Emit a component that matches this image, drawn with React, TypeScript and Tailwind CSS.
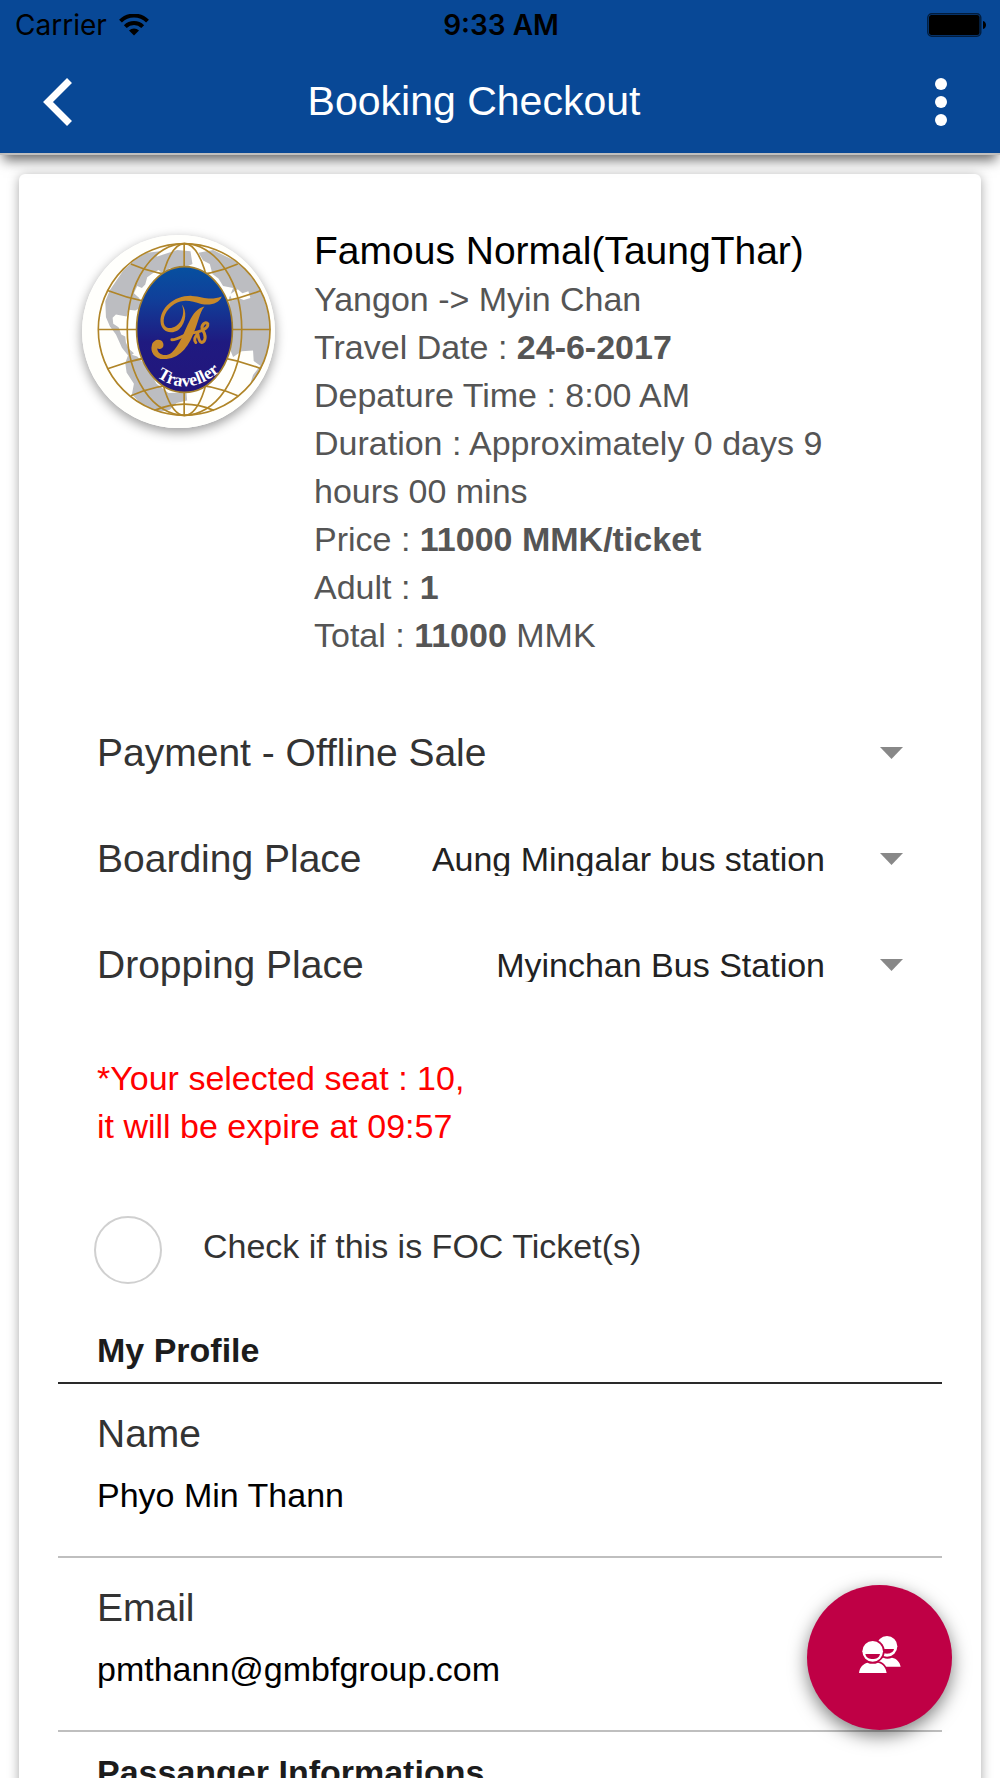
import React, { useState } from 'react';

interface PlaceSelectProps {
  id: string;
  label: string;
  options: string[];
}

interface ProfileFieldProps {
  id: string;
  label: string;
  type: string;
  defaultValue: string;
}

const Caret = () => (
  <svg className="w-[23px] h-3 shrink-0 pointer-events-none" viewBox="0 0 23 12" fill="#888888">
    <path d="M0 0H23L11.5 12Z" />
  </svg>
);

const WifiIcon = () => (
  <svg className="w-[30px] h-[22px]" viewBox="0 0 30 22">
    <path d="M1.5 7.2A19 19 0 0 1 28.5 7.2" fill="none" stroke="#000" strokeWidth="4" />
    <path d="M6.3 12.6A12.300 12.300 0 0 1 23.7 12.6" fill="none" stroke="#000" strokeWidth="4" />
    <path d="M10 16.4A7.2 7.2 0 0 1 20 16.4L15 21.5Z" />
  </svg>
);

const BatteryIcon = () => (
  <svg className="w-[60px] h-6" viewBox="0 0 60 24">
    <rect x="0.8" y="0.8" width="53" height="22.4" rx="4" fill="none" stroke="#021c3c" strokeWidth="1.4" />
    <rect x="2" y="2" width="50.6" height="20" rx="2.5" />
    <path d="M56 8C60 9 60 15 56 16Z" />
  </svg>
);

const TravellerLogo = () => (
  <svg className="w-full h-full rounded-full" viewBox="66 73 580 580" role="img" aria-label="Famous Traveller">
    <defs>
      <linearGradient id="badge" x1="0" y1="0" x2="0" y2="1">
        <stop offset="0" stopColor="#0650a0" />
        <stop offset="0.25" stopColor="#10409a" />
        <stop offset="0.6" stopColor="#1f1a80" />
        <stop offset="1" stopColor="#23167c" />
      </linearGradient>
      <clipPath id="globe">
        <circle cx="373" cy="357" r="259" />
      </clipPath>
      <path id="motto" d="M278 490Q385 574 492 472" />
    </defs>
    <rect x="66" y="73" width="580" height="580" fill="#fffffc" />
    <g clipPath="url(#globe)" fill="#bcbdc1">
      <path d="M262 126L300 122L290 138L322 128L352 118L392 122L398 160L372 172L330 172L310 190L296 178L282 186L262 200L256 222L246 232L232 226L222 248L238 262L246 290L226 300L206 298L200 318L168 312L158 322L160 340L176 350L184 372L196 378L198 396L206 414L222 428L208 440L186 412L168 372L150 348L138 320L136 272L150 238L190 180L226 146Z" />
      <path d="M206 430L232 438L262 470L290 520L326 548L380 546L382 570L350 578L330 598L290 606L240 576L216 552L222 520L200 486L196 458Z" />
      <path d="M416 126L460 118L540 158L600 230L634 330L634 400L612 460L588 520L566 538L580 494L602 466L582 452L580 420L546 422L520 440L504 400L510 300L508 262L520 232L490 226L476 204L458 190L450 160L430 150Z" />
    </g>
    <path d="M510 252L534 236L548 248L566 242L572 262L552 268L536 262L518 270Z" fill="#fffffc" />
    <g fill="none" stroke="#b08528" strokeWidth="5">
      <circle cx="373" cy="357" r="258" />
      <ellipse cx="374" cy="357" rx="172" ry="258" />
      <ellipse cx="374" cy="357" rx="84" ry="258" />
      <path d="M373 98V616M114 357H632" />
      <path d="M143 240Q374 330 604 240M213 160Q374 230 534 160" />
      <path d="M143 475Q374 385 604 475M213 556Q374 486 534 556M284 600Q374 562 462 600" />
    </g>
    <ellipse cx="374" cy="357" rx="144" ry="189" fill="url(#badge)" stroke="#a5802e" strokeWidth="5" />
    {/* gold monogram swashes */}
    <g fill="#c8892a">
      <path d="M366 282C382 300 380 336 358 356C336 374 304 366 302 334C300 292 344 254 396 256C430 258 448 272 486 258C478 280 450 286 424 280C396 272 372 264 344 280C318 296 306 324 314 344C324 360 350 352 362 332C372 314 372 298 366 282Z" />
      <path d="M434 288C418 308 416 336 402 366C386 410 358 446 312 446C284 446 270 424 276 404C280 386 304 382 310 398C314 412 302 418 292 414C294 434 318 440 336 426C360 404 372 366 388 334C400 308 414 292 434 288Z" />
    </g>
    <g fill="none" stroke="#c8892a" strokeLinecap="round">
      <path d="M336 388C358 388 370 372 392 368C424 364 446 354 444 340C438 330 422 344 428 358C440 374 438 394 426 396C416 394 416 378 414 370C404 378 402 390 408 396" strokeWidth="9" />
    </g>
    <text fontFamily="Liberation Serif, serif" fontWeight="700" fontSize="53" fill="#fff">
      <textPath href="#motto" startOffset="50%" textAnchor="middle">
        Traveller
      </textPath>
    </text>
  </svg>
);

const PeopleIcon = () => (
  <svg className="w-[42px] h-[37px]" viewBox="233 225 126 111">
    <circle cx="317" cy="256" r="31" fill="#fff" />
    <path d="M298 264H338C336 274 326 278 317 278C308 278 300 274 298 264Z" fill="#bf0045" />
    <path d="M284 317C286 300 298 292 306 290Q318 296 332 290C346 292 356 304 358 317Z" fill="#fff" />
    <circle cx="274" cy="271" r="36" fill="#bf0045" />
    <path d="M226 340C230 310 244 298 262 300H286C304 300 318 314 322 340Z" fill="#bf0045" />
    <circle cx="274" cy="271" r="31" fill="#fff" />
    <path d="M252 279H296C294 291 284 294 274 294C264 294 254 291 252 279Z" fill="#bf0045" />
    <path d="M233 336C235 318 246 308 258 305Q274 312 290 305C304 308 314 320 316 336Z" fill="#fff" />
  </svg>
);

const PlaceSelect: React.FC<PlaceSelectProps> = ({ id, label, options }) => (
  <div className="flex items-center h-[106px] px-[39px]">
    <label htmlFor={id} className="text-[39px] text-[#333333] whitespace-nowrap">
      {label}
    </label>
    <div className="flex flex-1 justify-end items-start h-[35px] mr-[55px] overflow-hidden">
      <select id={id} className="appearance-none [field-sizing:content] text-[34px] leading-[34px] text-[#222222] outline-none">
        {options.map(option => (
          <option key={option}>{option}</option>
        ))}
      </select>
    </div>
    <Caret />
  </div>
);

const ProfileField: React.FC<ProfileFieldProps> = ({ id, label, type, defaultValue }) => (
  <div className="flex flex-col px-[39px] pt-[26px] pb-[37px] border-b-2 border-[#bfbfbf]">
    <label htmlFor={id} className="text-[39px] leading-[48px] text-[#333333]">
      {label}
    </label>
    <input
      id={id}
      type={type}
      defaultValue={defaultValue}
      className="mt-[13px] h-12 w-full text-[34px] leading-[48px] text-black outline-none"
    />
  </div>
);

export default function App() {
  const [isFoc, setIsFoc] = useState(false);

  return (
    <div className="relative flex flex-col h-screen overflow-hidden bg-white font-['Liberation_Sans',Arial,sans-serif]">
      <header className="relative z-10 shrink-0 bg-[#084896] border-b-2 border-[#c0bfbe] shadow-[0_8px_12px_-3px_rgba(0,0,0,0.6)]">
        <div className="grid grid-cols-3 items-center h-[50px] pl-[15px] pr-[13px] font-['Inter',sans-serif] text-[28px] text-black">
          <div className="flex items-center gap-3">
            <span>Carrier</span>
            <WifiIcon />
          </div>
          <span className="text-center font-semibold">9:33 AM</span>
          <div className="flex justify-end">
            <BatteryIcon />
          </div>
        </div>
        <div className="flex items-center h-[103px] pl-10 pr-[50px]">
          <button type="button" aria-label="Back" className="w-9 h-12">
            <svg className="w-9 h-12" viewBox="0 0 36 48" fill="none" stroke="#fff" strokeWidth="7">
              <path d="M29.5 2.500L8 24L29.5 45.500" />
            </svg>
          </button>
          <h1 className="flex-1 text-center text-[41px] text-white">Booking Checkout</h1>
          <button type="button" aria-label="More options" className="flex justify-end w-[78px] h-12">
            <svg className="w-[18px] h-12" viewBox="0 0 18 48" fill="#fff">
              <circle cx="9" cy="6" r="6" />
              <circle cx="9" cy="24" r="6" />
              <circle cx="9" cy="42" r="6" />
            </svg>
          </button>
        </div>
      </header>

      <main className="flex-1 overflow-y-auto [scrollbar-width:none]">
        <div className="mx-[19px] mt-[19px] px-[39px] pb-10 bg-white rounded-md shadow-[0_2px_12px_rgba(0,0,0,0.35)]">
          <section className="flex gap-[39px] pt-[53px] pl-6 pr-[54px]">
            <div className="shrink-0 mt-2 size-[193px] rounded-full shadow-[0_4px_12px_rgba(0,0,0,0.4)]">
              <TravellerLogo />
            </div>
            <div className="text-[34px] leading-[48px] text-[#555555]">
              <h2 className="text-[39px] text-black whitespace-nowrap">Famous Normal(TaungThar)</h2>
              <p>Yangon -&gt; Myin Chan</p>
              <p>Travel Date : <b>24-6-2017</b></p>
              <p>Depature Time : 8:00 AM</p>
              <p>Duration : Approximately 0 days 9 hours 00 mins</p>
              <p>Price : <b>11000 MMK/ticket</b></p>
              <p>Adult : <b>1</b></p>
              <p>Total : <b>11000</b> MMK</p>
            </div>
          </section>

          <section className="mt-[41px]">
            <div className="flex items-center h-[106px] px-[39px]">
              <select
                aria-label="Payment"
                className="appearance-none flex-1 text-[39px] text-[#333333] outline-none"
              >
                <option>Payment - Offline Sale</option>
              </select>
              <Caret />
            </div>
            <PlaceSelect id="boarding" label="Boarding Place" options={['Aung Mingalar bus station']} />
            <PlaceSelect id="dropping" label="Dropping Place" options={['Myinchan Bus Station']} />
          </section>

          <p className="mt-9 px-[39px] text-[34px] leading-[48px] text-[#ff0000]">
            *Your selected seat : 10,
            <br />
            it will be expire at 09:57
          </p>

          <div className="flex items-center gap-[41px] mt-[66px] pl-9">
            <input
              id="foc"
              type="checkbox"
              checked={isFoc}
              onChange={e => setIsFoc(e.target.checked)}
              className="appearance-none size-[68px] rounded-full border-2 border-[#d0d0d0] checked:bg-[#084896]"
            />
            <label htmlFor="foc" className="pb-2 text-[34px] text-[#333333]">
              Check if this is FOC Ticket(s)
            </label>
          </div>

          <section className="mt-[26px]">
            <h3 className="px-[39px] pt-4 pb-2 border-b-2 border-[#2a2a2a] text-[34px] leading-[48px] font-bold text-[#1c1c1c]">
              My Profile
            </h3>
            <ProfileField id="name" label="Name" type="text" defaultValue="Phyo Min Thann" />
            <ProfileField id="email" label="Email" type="email" defaultValue="pmthann@gmbfgroup.com" />
          </section>

          <section>
            <h3 className="px-[39px] pt-4 pb-2 border-b-2 border-[#2a2a2a] text-[34px] leading-[48px] font-bold text-[#1c1c1c]">
              Passanger Informations
            </h3>
          </section>
        </div>
      </main>

      <button
        type="button"
        aria-label="Passengers"
        className="absolute z-10 bottom-12 right-12 flex items-center justify-center size-[145px] pb-1.5 rounded-full bg-[#bf0045] shadow-[0_6px_18px_rgba(0,0,0,0.5)]"
      >
        <PeopleIcon />
      </button>
    </div>
  );
}
